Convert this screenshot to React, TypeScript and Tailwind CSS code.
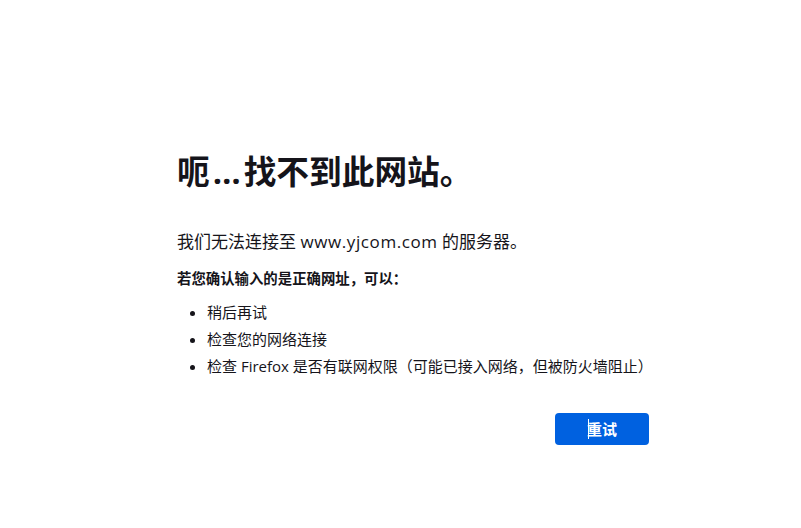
import React from "react";

const font = {
  fontFamily:
    '"Open Sans", "Noto Sans CJK SC", "Noto Sans", sans-serif',
};

const items = [
  "稍后再试",
  "检查您的网络连接",
  "检查 Firefox 是否有联网权限（可能已接入网络，但被防火墙阻止）",
];

export default function App() {
  return (
    <div
      className="w-[801px] h-[528px] bg-white text-[#15141a] overflow-hidden"
      style={font}
    >
      <div className="pl-[177px] pt-[148px] w-[649px]">
        <h1 className="text-[32.7px] leading-[48px] font-bold">
          呃<span className="px-[3px]">…</span>找不到此网站。
        </h1>
        <p className="mt-[34px] text-[17px] leading-6">
          我们无法连接至 <span className="tracking-[0.6px]">www.yjcom.com</span> 的服务器。
        </p>
        <p className="mt-[15px] text-[14.4px] leading-5 font-bold">
          若您确认输入的是正确网址，可以：
        </p>
        <ul className="mt-[10px] pl-[30px] list-disc text-[15px] leading-[27px]">
          {items.map((item) => (
            <li key={item}>{item}</li>
          ))}
        </ul>
        <div className="mt-[33px] flex justify-end">
          <button className="relative w-[94px] h-8 rounded bg-[#0061e0] text-white text-[15px] font-bold">
            <span className="absolute left-[33px] top-[6px] h-[20px] w-px bg-white" />
            重试
          </button>
        </div>
      </div>
    </div>
  );
}
